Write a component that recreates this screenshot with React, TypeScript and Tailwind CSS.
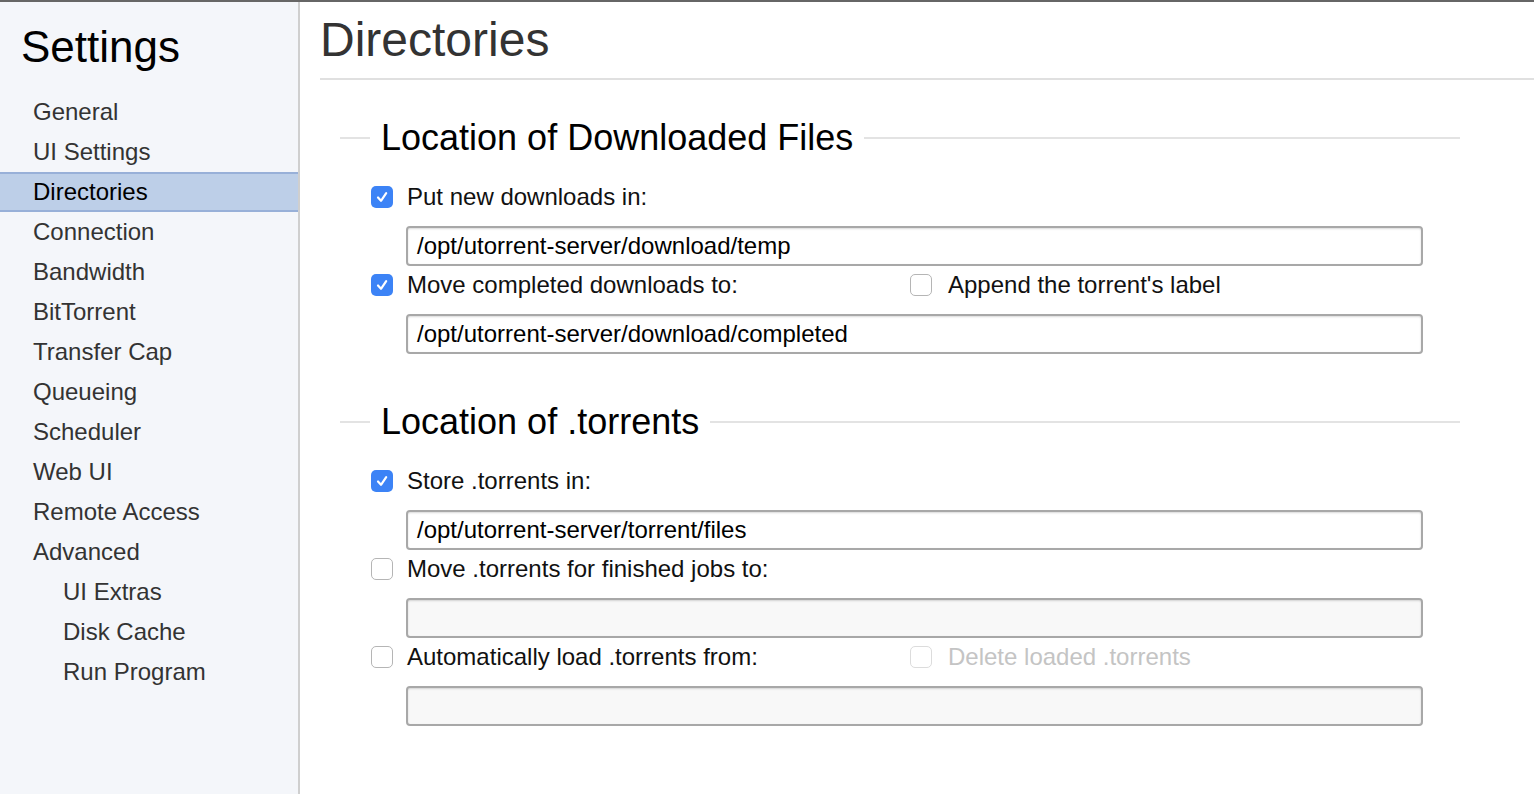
import React from 'react';

type Row = {
  label: string;
  checked: boolean;
  value: string;
  extra?: { label: string; checked: boolean; disabled?: boolean };
};

const Checkbox = ({ checked, disabled }: { checked: boolean; disabled?: boolean }) => {
  if (checked) {
    return (
      <span className="flex h-[22px] w-[22px] shrink-0 items-center justify-center rounded-[5px] bg-[#3c83f6]">
        <svg width="14" height="14" viewBox="0 0 14 14" fill="none">
          <path d="M3 7.5 L6 10.8 L11.2 3.2" stroke="#fff" strokeWidth="2.2" strokeLinecap="round" strokeLinejoin="round" />
        </svg>
      </span>
    );
  }
  return (
    <span
      className={`block h-[22px] w-[22px] shrink-0 rounded-[5px] border bg-white ${
        disabled ? 'border-[#dcdcdc]' : 'border-[#b5b5b5]'
      }`}
    />
  );
};

const PathInput = ({ value }: { value: string }) => (
  <div
    className={`ml-[66px] mt-[15px] mb-[5px] flex h-10 w-[1017px] items-center rounded-[4px] border-2 border-[#a8a8a8] pl-[9px] text-[24px] text-black shadow-[inset_0_1px_2px_rgba(0,0,0,0.15)] ${
      value ? 'bg-white' : 'bg-[#f8f8f8]'
    }`}
  >
    {value}
  </div>
);

const Section = ({ title, rows, className }: { title: string; rows: Row[]; className: string }) => (
  <div className={`w-[1120px] ${className}`}>
    <div className="flex h-11 items-center">
      <span className="h-[2px] w-[30px] bg-[#e3e3e3]" />
      <span className="px-[11px] text-[36px] leading-none text-black">{title}</span>
      <span className="h-[2px] flex-1 bg-[#e3e3e3]" />
    </div>
    <div className="mt-[23px]">
      {rows.map((row) => (
        <div key={row.label}>
          <div className="flex h-7 items-center pl-[31px] text-[24px] text-[#111]">
            <div className="flex w-[539px] items-center gap-[14px]">
              <Checkbox checked={row.checked} />
              <span>{row.label}</span>
            </div>
            {row.extra && (
              <div className="flex items-center gap-[16px]">
                <Checkbox checked={row.extra.checked} disabled={row.extra.disabled} />
                <span className={row.extra.disabled ? 'text-[#c4c4c4]' : ''}>{row.extra.label}</span>
              </div>
            )}
          </div>
          <PathInput value={row.value} />
        </div>
      ))}
    </div>
  </div>
);

const navItems = [
  { label: 'General' },
  { label: 'UI Settings' },
  { label: 'Directories', active: true },
  { label: 'Connection' },
  { label: 'Bandwidth' },
  { label: 'BitTorrent' },
  { label: 'Transfer Cap' },
  { label: 'Queueing' },
  { label: 'Scheduler' },
  { label: 'Web UI' },
  { label: 'Remote Access' },
  { label: 'Advanced' },
  { label: 'UI Extras', sub: true },
  { label: 'Disk Cache', sub: true },
  { label: 'Run Program', sub: true },
];

const App = () => {
  return (
    <div
      className="flex h-[794px] w-[1534px] overflow-hidden border-t-2 border-[#666] bg-white"
      style={{ fontFamily: '"Liberation Sans", Arial, sans-serif' }}
    >
      <aside className="w-[300px] shrink-0 border-r-2 border-[#cfcfcf] bg-[#f4f6fa]">
        <div className="flex h-[90px] items-center pl-[21px] text-[44px] text-black">Settings</div>
        <nav>
          {navItems.map((item) => (
            <div
              key={item.label}
              className={`flex h-10 items-center text-[24px] ${item.sub ? 'pl-[63px]' : 'pl-[33px]'} ${
                item.active
                  ? 'border-y-2 border-[#98b0d8] bg-[#bdcfe8] text-black'
                  : 'text-[#333]'
              }`}
            >
              {item.label}
            </div>
          ))}
        </nav>
      </aside>

      <main className="flex-1 pl-[20px]">
        <div className="flex h-[78px] items-center border-b-2 border-[#e0e0e0] text-[48px] text-[#333]">
          Directories
        </div>

        <Section
          className="ml-[20px] mt-[36px]"
          title="Location of Downloaded Files"
          rows={[
            { label: 'Put new downloads in:', checked: true, value: '/opt/utorrent-server/download/temp' },
            {
              label: 'Move completed downloads to:',
              checked: true,
              value: '/opt/utorrent-server/download/completed',
              extra: { label: "Append the torrent's label", checked: false },
            },
          ]}
        />

        <Section
          className="ml-[20px] mt-[46px]"
          title="Location of .torrents"
          rows={[
            { label: 'Store .torrents in:', checked: true, value: '/opt/utorrent-server/torrent/files' },
            { label: 'Move .torrents for finished jobs to:', checked: false, value: '' },
            {
              label: 'Automatically load .torrents from:',
              checked: false,
              value: '',
              extra: { label: 'Delete loaded .torrents', checked: false, disabled: true },
            },
          ]}
        />
      </main>
    </div>
  );
};

export default App;
